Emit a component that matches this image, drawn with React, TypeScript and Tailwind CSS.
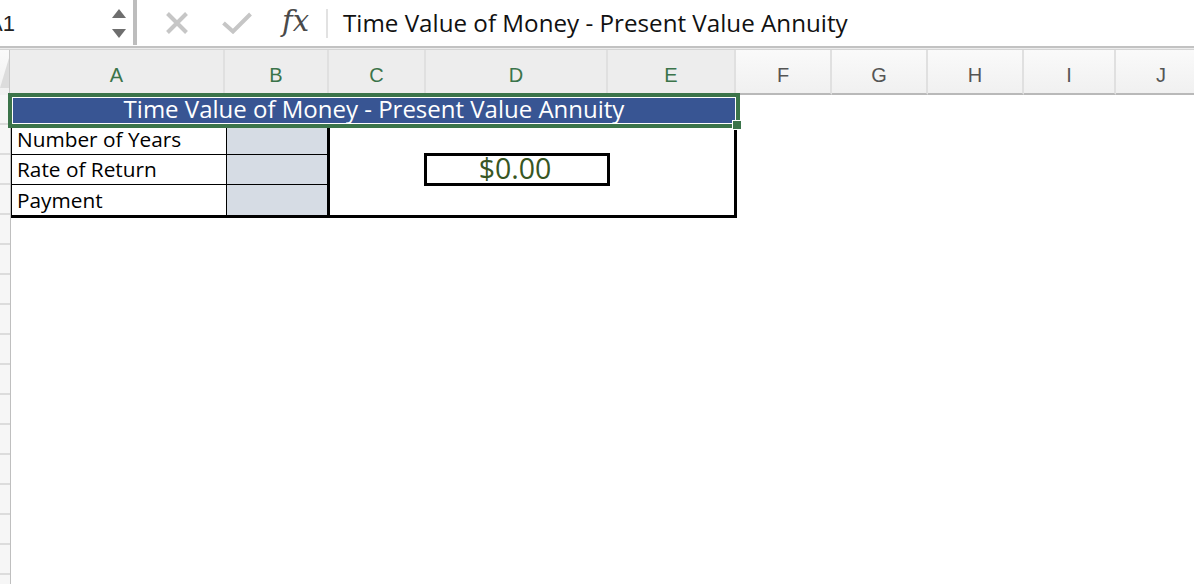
import React from 'react';

const cols = [
  { l: 'A', cls: 'w-[215px]', sel: true },
  { l: 'B', cls: 'w-[104px]', sel: true },
  { l: 'C', cls: 'w-[97px]', sel: true },
  { l: 'D', cls: 'w-[182px]', sel: true },
  { l: 'E', cls: 'w-[128px]', sel: true },
  { l: 'F', cls: 'w-[96px]', sel: false },
  { l: 'G', cls: 'w-[96px]', sel: false },
  { l: 'H', cls: 'w-[96px]', sel: false },
  { l: 'I', cls: 'w-[92px]', sel: false },
  { l: 'J', cls: 'w-[92px]', sel: false },
];

const labels = ['Number of Years', 'Rate of Return', 'Payment'];

const FormulaBar = () => (
  <div className="h-[46px] flex items-stretch bg-white shrink-0">
    <div className="w-[133px] flex items-center overflow-hidden">
      <span className="-ml-[12px] text-[22px] text-[#222] font-['Liberation_Sans',sans-serif]">A1</span>
      <div className="ml-auto mr-[7px] flex flex-col gap-[11px]">
        <svg width="14" height="9" viewBox="0 0 14 9">
          <polygon points="7,0 14,9 0,9" fill="#6e6e6e" />
        </svg>
        <svg width="14" height="9" viewBox="0 0 14 9">
          <polygon points="0,0 14,0 7,9" fill="#6e6e6e" />
        </svg>
      </div>
    </div>
    <div className="w-[4px] h-[45px] bg-[#bdbdbd]" />
    <div className="flex items-center pl-[29px]">
      <svg width="22" height="22" viewBox="0 0 22 22">
        <path d="M1.5 1.5 L20.5 20.5 M20.5 1.5 L1.5 20.5" stroke="#c6c6c6" strokeWidth="4" />
      </svg>
      <svg width="30" height="22" viewBox="0 0 30 22" className="ml-[34px]">
        <path d="M1.5 11 L11 19.5 L28.5 2" stroke="#c6c6c6" strokeWidth="4" fill="none" />
      </svg>
      <span className="ml-[30px] w-[30px] text-[29px] leading-none italic text-[#4a4a4a] font-['DejaVu_Serif',serif] pb-[4px]">
        fx
      </span>
      <div className="ml-[14px] w-[2px] h-[29px] bg-[#e2e2e2]" />
      <span className="ml-[15px] text-[24.2px] text-[#111] font-['Open_Sans',sans-serif]">
        Time Value of Money - Present Value Annuity
      </span>
    </div>
  </div>
);

const ColumnHeader = () => (
  <div className="h-[45px] flex shrink-0 bg-gradient-to-b from-[#fafafa] to-[#f0f0f0]">
    <div className="w-[11px] border-r border-[#c8c8c8] pt-[8px]">
      <svg width="9" height="30" viewBox="0 0 9 30">
        <polygon points="9,0 9,30 0,30" fill="#dcdcdc" />
      </svg>
    </div>
    {cols.map((c) => (
      <div
        key={c.l}
        className={`${c.cls} shrink-0 flex items-center justify-center pt-[7px] border-r-2 border-[#e0e0e0] text-[20px] font-['Liberation_Sans',sans-serif] ${
          c.sel ? 'text-[#3b744a] bg-[#ededed] border-b-2 border-b-[#3b744a]' : 'text-[#555] border-b-2 border-b-[#b9b9b9]'
        }`}
      >
        {c.l}
      </div>
    ))}
  </div>
);

const RowHeader = () => (
  <div className="w-[11px] shrink-0 flex flex-col border-r border-[#bfbfbf] bg-[#f6f6f6]">
    {Array.from({ length: 17 }).map((_, i) => (
      <div key={i} className="h-[30px] shrink-0 border-b-2 border-[#dcdcdc]" />
    ))}
  </div>
);

const Sheet = () => (
  <div className="relative flex-1 font-['Open_Sans',sans-serif]">
    <div className="w-[726px] h-[30px] bg-[#385593] text-white text-[24px] flex items-center justify-center leading-none pb-[3px]">
      Time Value of Money - Present Value Annuity
    </div>
    <div className="flex w-[726px]">
      <div className="flex flex-col border-b-[3px] border-black">
        {labels.map((t, i) => (
          <div key={t} className="flex h-[30px]">
            <div
              className={`w-[215px] border-l border-black pl-[5px] text-[20.8px] text-black leading-none flex items-end pb-[4px] ${
                i < 2 ? 'border-b border-black' : ''
              }`}
            >
              {t}
            </div>
            <div
              className={`w-[104px] bg-[#d6dce4] border-l border-black border-r-[3px] ${
                i < 2 ? 'border-b border-black' : ''
              }`}
            />
          </div>
        ))}
      </div>
      <div className="flex-1 border-r-[3px] border-b-[3px] border-black pl-[94px] pt-[28px]">
        <div className="w-[186px] h-[33px] border-[3px] border-black flex items-center justify-center text-[28.5px] leading-none text-[#375623] pb-[2px] pr-[4px]">
          $0.00
        </div>
      </div>
    </div>

    <div className="absolute -top-[2px] -left-[3px] w-[732px] h-[35px] border-4 border-[#3b744a]">
      <div className="w-full h-full border border-white" />
    </div>
    <div className="absolute top-[25px] left-[721px] w-[10px] h-[10px] bg-[#3b744a] border border-white" />
  </div>
);

export default function App() {
  return (
    <div className="w-[1194px] h-[584px] overflow-hidden bg-white flex flex-col">
      <FormulaBar />
      <div className="h-[4px] shrink-0 border-t-2 border-[#c2c2c2] border-b border-b-[#d4d4d4] bg-[#ececec]" />
      <ColumnHeader />
      <div className="flex flex-1 min-h-0">
        <RowHeader />
        <Sheet />
      </div>
    </div>
  );
}
